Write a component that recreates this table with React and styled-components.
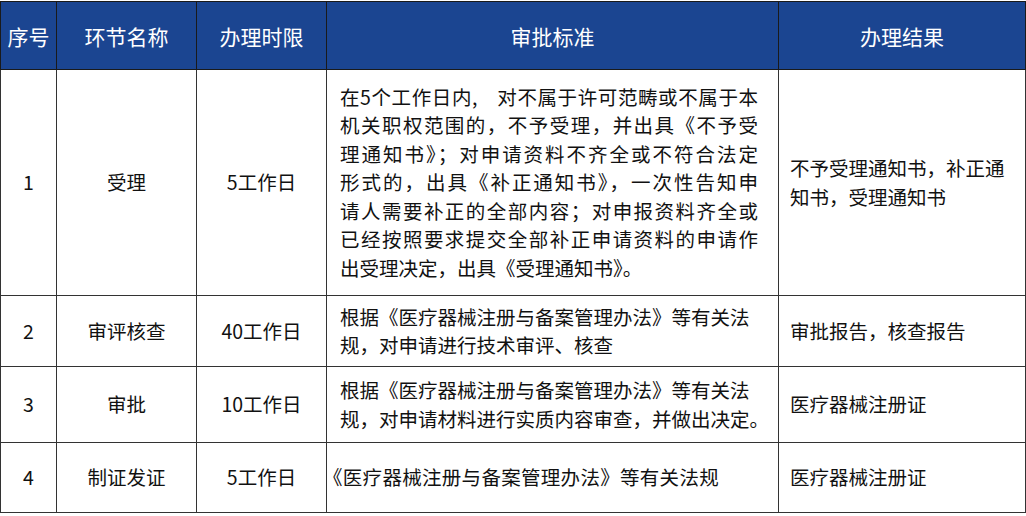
import React from 'react'
import styled, { createGlobalStyle } from 'styled-components';

const GlobalStyle = createGlobalStyle`
  html, body {
    margin: 0;
    padding: 0;
    background: #fff;
  }
  body {
    font-family: "Noto Sans CJK SC", "Noto Sans", sans-serif;
  }
`

const columns = [
  { title: '序号', width: 56 },
  { title: '环节名称', width: 140 },
  { title: '办理时限', width: 130 },
  { title: '审批标准', width: 452 },
  { title: '办理结果', width: 247 },
];

// first row keeps the line breaks of the printed form
const acceptLines = [
  '在5个工作日内,\u00a0\u00a0\u00a0 对不属于许可范畴或不属于本',
  '机关职权范围的，不予受理，并出具《不予受',
  '理通知书》；对申请资料不齐全或不符合法定',
  '形式的，出具《补正通知书》，一次性告知申',
  '请人需要补正的全部内容；对申报资料齐全或',
  '已经按照要求提交全部补正申请资料的申请作',
  '出受理决定，出具《受理通知书》。',
];

const rows = [
  {
    no: '1',
    name: '受理',
    time: '5工作日',
    lines: acceptLines,
    result: '不予受理通知书，补正通知书，受理通知书',
    height: 226,
  },
  {
    no: '2',
    name: '审评核查',
    time: '40工作日',
    rule: '根据《医疗器械注册与备案管理办法》等有关法规，对申请进行技术审评、核查',
    result: '审批报告，核查报告',
    height: 71,
  },
  {
    no: '3',
    name: '审批',
    time: '10工作日',
    rule: '根据《医疗器械注册与备案管理办法》等有关法规，对申请材料进行实质内容审查，并做出决定。',
    result: '医疗器械注册证',
    height: 76,
  },
  {
    no: '4',
    name: '制证发证',
    time: '5工作日',
    rule: '《医疗器械注册与备案管理办法》等有关法规',
    result: '医疗器械注册证',
    height: 70,
    tight: true,
  },
];

function App() {
  return (
    <>
      <GlobalStyle />
      <Table>
        <colgroup>
          {columns.map((c) => (
            <col key={c.title} style={{ width: c.width }} />
          ))}
        </colgroup>
        <thead>
          <HeadRow>
            {columns.map((c) => (
              <HeadCell key={c.title}>{c.title}</HeadCell>
            ))}
          </HeadRow>
        </thead>
        <tbody>
          {rows.map((r) => (
            <BodyRow key={r.no} style={{ height: r.height }}>
              <Cell align="center">{r.no}</Cell>
              <Cell align="center">{r.name}</Cell>
              <Cell align="center">{r.time}</Cell>
              <TextCell tight={r.tight}>
                {r.lines
                  ? r.lines.map((l, i) => (
                      <Line key={i} last={i === r.lines.length - 1}>{l}</Line>
                    ))
                  : r.rule}
              </TextCell>
              <ResultCell>{r.result}</ResultCell>
            </BodyRow>
          ))}
        </tbody>
      </Table>
    </>
  )
}

export default App;

const Table = styled.table`
  width: 1025px;
  border-collapse: collapse;
  table-layout: fixed;
  border: 1px solid #2a2a2a;
  margin-top: 1px;
`

const HeadRow = styled.tr`
  height: 68px;
  background-color: #1b4591;
`

const HeadCell = styled.th`
  color: #fff;
  font-size: 21px;
  font-weight: 400;
  text-align: center;
  vertical-align: middle;
  border: 1px solid #1a1a1a;
  padding: 0;
  white-space: nowrap;
`

const BodyRow = styled.tr`
  background: #fff;
`

const Cell = styled.td`
  font-size: 19.5px;
  color: #111;
  text-align: ${(p) => p.align || 'left'};
  vertical-align: middle;
  border: 1px solid #333;
  padding: 0;
  line-height: 28.5px;
`

const TextCell = styled(Cell)`
  padding: 0 8px 0 ${(p) => (p.tight ? '0' : '13px')};
  text-indent: ${(p) => (p.tight ? '-4px' : '0')};
  letter-spacing: ${(p) => (p.tight ? '0.3px' : '0')};
`

const ResultCell = styled(Cell)`
  padding: 0 16px 0 11px;
`

const Line = styled.div`
  width: 418px;
  font-size: 19.5px;
  white-space: nowrap;
  text-align: justify;
  text-align-last: ${(p) => (p.last ? 'left' : 'justify')};
`
